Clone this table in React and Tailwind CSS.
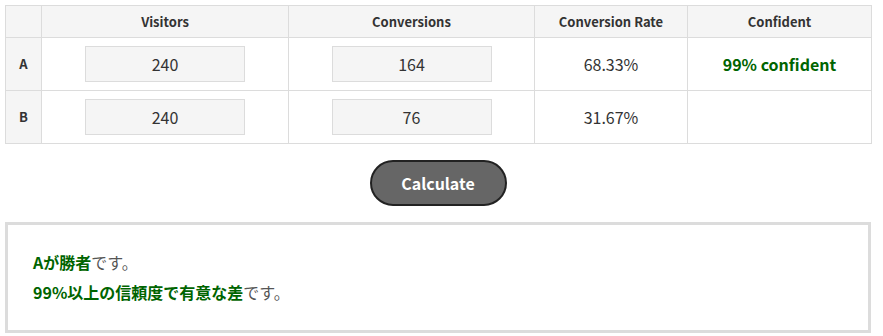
import {useState} from "react";

const rows = [
    {label: "A", visitors: 240, conversions: 164},
    {label: "B", visitors: 240, conversions: 76},
];

function App() {
    const [data] = useState(rows);

    const rate = (r) => ((r.conversions / r.visitors) * 100).toFixed(2) + "%";

    return (
        <main className="w-[876px] min-h-[336px] bg-white pt-[5px] px-[5px] text-[#333] font-['Noto_Sans_CJK_JP','Noto_Sans',sans-serif]">
            <table className="w-[866px] border-collapse table-fixed">
                <colgroup>
                    <col className="w-[36px]"/>
                    <col className="w-[247px]"/>
                    <col className="w-[246px]"/>
                    <col className="w-[153px]"/>
                    <col className="w-[184px]"/>
                </colgroup>
                <thead>
                <tr className="h-[32px] bg-[#f5f5f5]">
                    <th className="border border-[#dcdcdc]"></th>
                    <th className="border border-[#dcdcdc] text-[13px] font-bold">Visitors</th>
                    <th className="border border-[#dcdcdc] text-[13px] font-bold">Conversions</th>
                    <th className="border border-[#dcdcdc] text-[13px] font-bold">Conversion Rate</th>
                    <th className="border border-[#dcdcdc] text-[13px] font-bold">Confident</th>
                </tr>
                </thead>
                <tbody>
                {data.map((r, i) => (
                    <tr key={r.label} className="h-[53px]">
                        <td className="border border-[#dcdcdc] bg-[#f5f5f5] text-center text-[13px] font-bold">{r.label}</td>
                        <td className="border border-[#dcdcdc] text-center">
                            <input
                                readOnly
                                value={r.visitors}
                                className="w-[160px] h-[36px] border border-[#dcdcdc] bg-[#f5f5f5] text-center text-[16px] text-[#333] outline-none"
                            />
                        </td>
                        <td className="border border-[#dcdcdc] text-center">
                            <input
                                readOnly
                                value={r.conversions}
                                className="w-[160px] h-[36px] border border-[#dcdcdc] bg-[#f5f5f5] text-center text-[16px] text-[#333] outline-none"
                            />
                        </td>
                        <td className="border border-[#dcdcdc] text-center text-[16px]">{rate(r)}</td>
                        <td className="border border-[#dcdcdc] text-center text-[16px] font-bold text-[#006400]">
                            {i === 0 ? "99% confident" : ""}
                        </td>
                    </tr>
                ))}
                </tbody>
            </table>

            <div className="flex justify-center mt-[16px]">
                <button className="w-[137px] h-[46px] rounded-full border-2 border-[#222] bg-[#666] text-white text-[16px] font-bold">
                    Calculate
                </button>
            </div>

            <div className="mt-[16px] w-[866px] h-[111px] border-[3px] border-[#dcdcdc] pl-[25px] pt-[22px] text-[16px] font-bold leading-[30px]">
                <p><span className="text-[#006400]">Aが勝者</span><span className="font-normal text-[#555]">です。</span></p>
                <p><span className="text-[#006400]">99%以上の信頼度で有意な差</span><span className="font-normal text-[#555]">です。</span></p>
            </div>
        </main>
    );
}

export default App;
